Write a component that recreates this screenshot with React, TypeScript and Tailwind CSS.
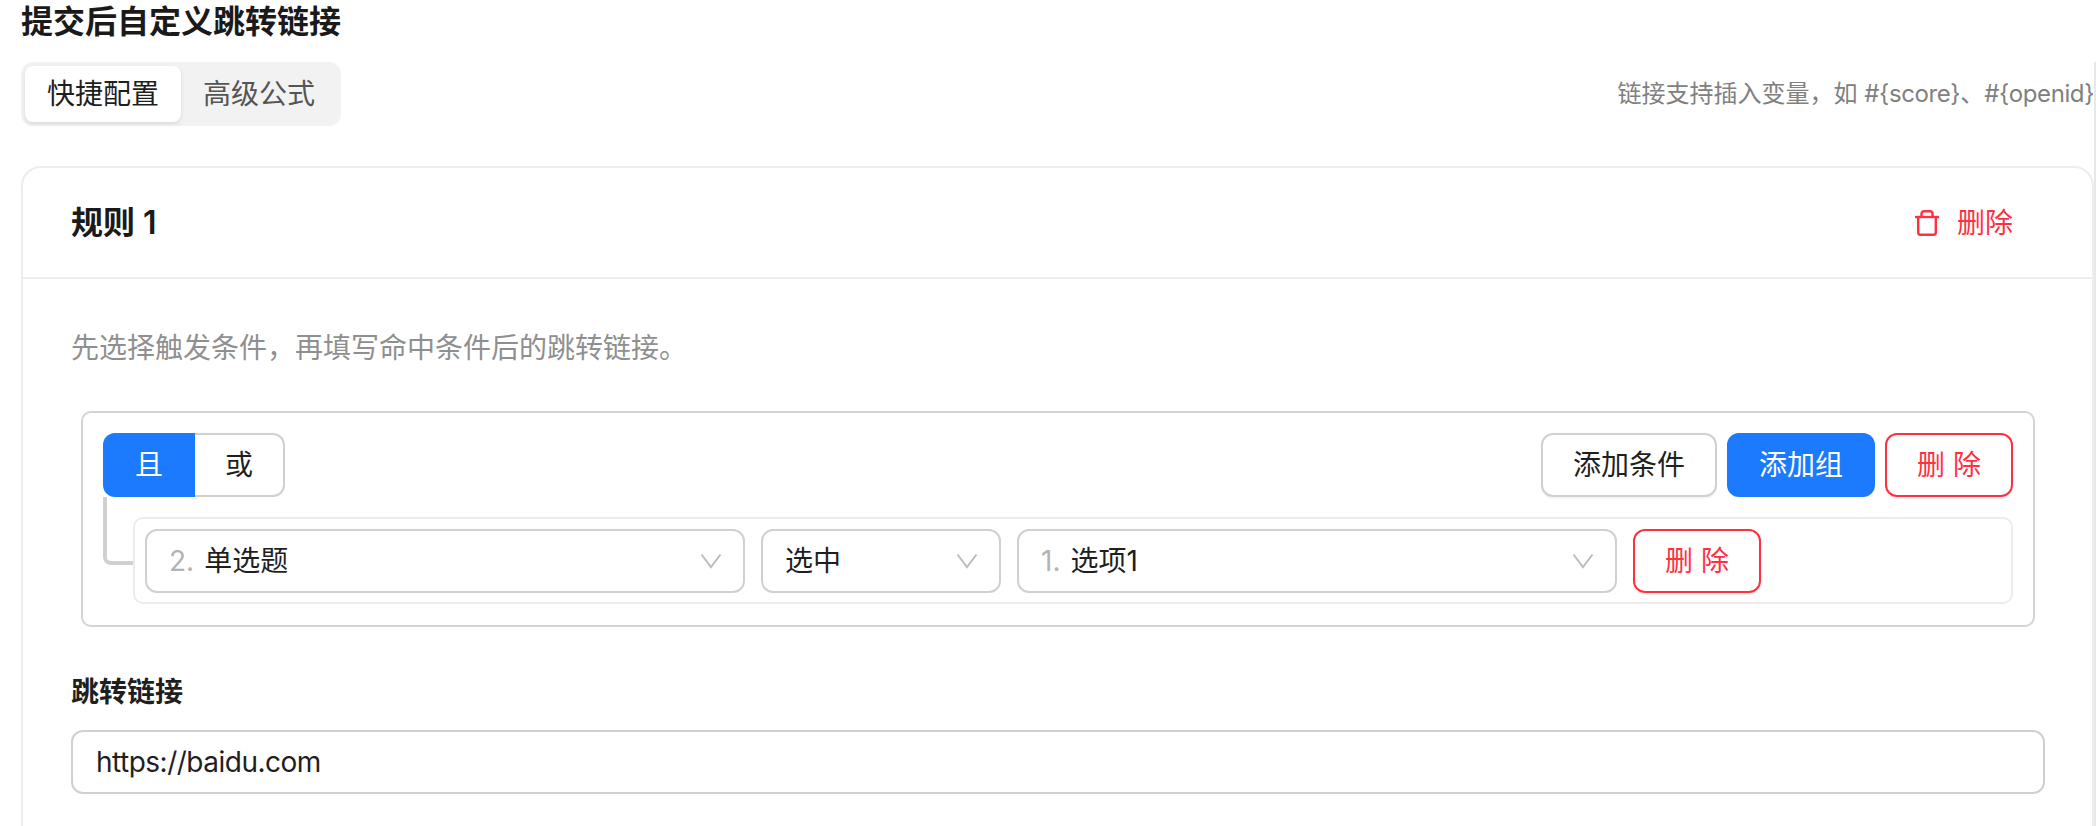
import type { ReactNode } from 'react';

const DANGER = 'border-[#ff3141] text-[#ff3141] shadow-[0_2px_0_rgba(255,38,5,0.06)]';

function Chevron() {
  return (
    <svg width="22" height="16" viewBox="0 0 22 16" fill="none" className="shrink-0">
      <path d="M1.5 1.5 11 14 20.5 1.5" stroke="#bdbdbd" strokeWidth="2" />
    </svg>
  );
}

function TrashIcon() {
  return (
    <svg width="24" height="26" viewBox="0 0 24 26" fill="none" stroke="#ff3141" strokeWidth="2.4">
      <path d="M0 7h24" />
      <path d="M6.5 7V3.5C6.5 2 7.5 1.2 9 1.2h6c1.5 0 2.5.8 2.5 2.3V7" />
      <path d="M3.2 7v15.5c0 1.5 1 2.3 2.3 2.3h13c1.3 0 2.3-.8 2.3-2.3V7" />
    </svg>
  );
}

function SelectBox({ width, index, label }: { width: string; index?: string; label: string }) {
  return (
    <div className={`${width} h-16 shrink-0 flex items-center justify-between rounded-xl border-2 border-[#d0d0d0] bg-white pl-[22px] pr-[21px] text-[28px]`}>
      <span className="text-[#1f1f1f]">
        {index && <span className="text-[#b3b3b3] mr-[10px]">{index}</span>}
        {label}
      </span>
      <Chevron />
    </div>
  );
}

function Btn({ className, children }: { className: string; children: ReactNode }) {
  return (
    <button className={`h-16 shrink-0 flex items-center justify-center rounded-xl border-2 bg-white text-[28px] ${className}`}>
      {children}
    </button>
  );
}

export default function App() {
  return (
    <div
      lang="zh-CN"
      className="w-[2096px] h-[826px] overflow-hidden bg-white text-[#1f1f1f] font-['Inter','Noto_Sans_CJK_SC',sans-serif]"
    >
      <h1 className="pl-[21px] pt-[2px] text-[32px] leading-10 font-semibold text-[#1a1a1a] mb-[20px]">提交后自定义跳转链接</h1>

      <div className="pl-[21px] border-r-2 border-[#e8e8e8] h-[764px]">
        <div className="flex items-center justify-between h-16 mb-[40px]">
          <div className="flex h-16 w-[320px] rounded-xl bg-[#f2f2f2] p-1 text-[28px]">
            <div className="w-[156px] rounded-lg bg-white flex items-center justify-center text-[#1f1f1f] shadow-[0_2px_4px_rgba(0,0,0,0.1)]">快捷配置</div>
            <div className="flex-1 flex items-center justify-center text-[#555555]">高级公式</div>
          </div>
          <p className="text-[24px] text-[#808080] whitespace-nowrap">
            链接支持插入变量{'\uFF0C'}如 <span className="tracking-[-0.4px]">#{'{score}'}</span>{'\u3001'}<span className="tracking-[-0.4px]">#{'{openid}'}</span>
          </p>
        </div>

        <section className="rounded-t-[20px] border-2 border-[#ededed] h-[700px]">
          <div className="h-[111px] pl-[48px] pr-[79px] flex items-center justify-between border-b-2 border-[#ededed]">
            <h2 className="text-[32px] font-semibold text-[#1a1a1a]">规则 1</h2>
            <button className="flex items-center gap-[18px] text-[28px] text-[#ff3141]">
              <TrashIcon />
              删除
            </button>
          </div>

          <div className="pl-[48px] pr-[47px] pt-[47px]">
            <p className="text-[28px] leading-[44px] text-[#8f8f8f] mb-[41px]">先选择触发条件{'\uFF0C'}再填写命中条件后的跳转链接。</p>

            <div className="ml-[10px] mr-[10px] rounded-[10px] border-2 border-[#d4d4d4] pl-[20px] pr-[20px] pt-[20px] pb-[21px]">
              <div className="flex items-center justify-between">
                <div className="flex text-[28px]">
                  <div className="w-[92px] h-16 flex items-center justify-center rounded-l-xl bg-[#1c7aff] text-white">且</div>
                  <div className="w-[90px] h-16 flex items-center justify-center rounded-r-xl border-2 border-l-0 border-[#d0d0d0]">或</div>
                </div>
                <div className="flex gap-[10px]">
                  <Btn className="w-[176px] border-[#d0d0d0] text-[#1f1f1f] shadow-[0_2px_0_rgba(0,0,0,0.04)]">添加条件</Btn>
                  <Btn className="w-[148px] !border-[#1c7aff] !bg-[#1c7aff] text-white">添加组</Btn>
                  <Btn className={`w-[128px] ${DANGER}`}>删 除</Btn>
                </div>
              </div>

              <div className="relative mt-[20px] ml-[30px] rounded-[10px] border-2 border-[#ececec] pl-[10px] pr-[9px] pt-[10px] pb-[9px] flex gap-[16px]">
                <div className="absolute left-[-32px] top-[-22px] w-[30px] h-[68px] border-l-4 border-b-4 border-[#d0d0d0] rounded-bl-lg" />
                <SelectBox width="w-[600px]" index="2." label="单选题" />
                <SelectBox width="w-[240px]" label="选中" />
                <SelectBox width="w-[600px]" index="1." label="选项1" />
                <Btn className={`w-[128px] ${DANGER}`}>删 除</Btn>
              </div>
            </div>

            <label className="block mt-[45px] mb-[18px] text-[28px] leading-10 font-semibold text-[#1f1f1f]">跳转链接</label>
            <div className="h-16 rounded-xl border-2 border-[#d0d0d0] flex items-center px-[23px] text-[28px] tracking-[-0.5px] text-[#1f1f1f]">https://baidu.com</div>
          </div>
        </section>
      </div>
    </div>
  );
}
